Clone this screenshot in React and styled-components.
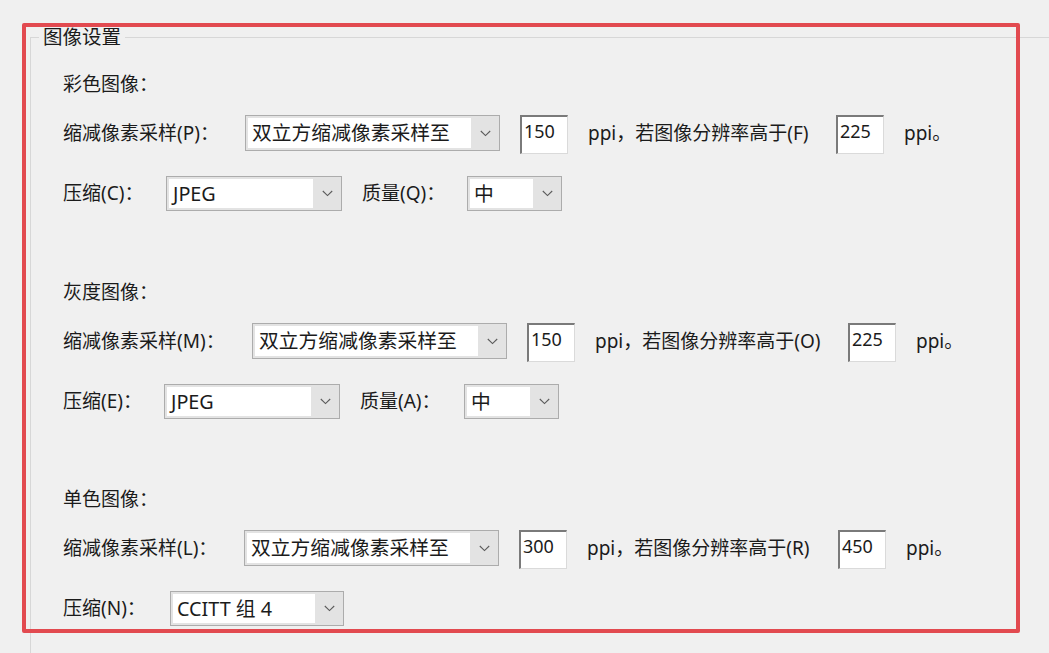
import styled, { createGlobalStyle } from 'styled-components';

const GlobalStyle = createGlobalStyle`
  html, body {
    margin: 0;
    padding: 0;
    background: #f0f0f0;
    overflow: hidden;
  }
  body {
    font-family: "Noto Sans", "Noto Sans CJK SC", sans-serif;
    color: #1b1b1b;
  }
`;

const Page = styled.div`
  position: relative;
  width: 1049px;
  height: 653px;
  padding: 25px 0 0 30px;
  box-sizing: border-box;
  overflow: hidden;
`;

const GroupBox = styled.fieldset`
  margin: 0;
  width: 100%;
  height: 100%;
  padding: 23px 0 0 8px;
  border: none;
  border-top: 1px solid #d7d7d7;
  border-left: 1px solid #d7d7d7;
  box-sizing: border-box;
  min-width: 0;
`;

const Legend = styled.legend`
  padding: 0 4px;
  font-size: 19.5px;
  line-height: 24px;
  color: #1b1b1b;
`;

const Body = styled.div`
  padding-left: 24px;
`;

const Section = styled.section`
  display: flex;
  flex-direction: column;
  margin-bottom: ${(p) => p.$after || 0}px;
`;

const Heading = styled.div`
  height: 24px;
  line-height: 24px;
  font-size: 19px;
  margin-bottom: 19px;
`;

const Row = styled.div`
  display: flex;
  align-items: flex-start;
  height: ${(p) => (p.$compact ? 35 : 39)}px;
  margin-bottom: ${(p) => (p.$compact ? 0 : 22)}px;
`;

const Label = styled.span`
  flex: none;
  width: ${(p) => p.$w}px;
  margin-left: ${(p) => p.$ml || 0}px;
  line-height: ${(p) => (p.$compact ? 35 : 36)}px;
  font-size: 19px;
  white-space: nowrap;
`;

const Select = styled.div`
  flex: none;
  display: flex;
  width: ${(p) => p.$w}px;
  height: ${(p) => (p.$compact ? 35 : 36)}px;
  box-sizing: border-box;
  border: 1px solid #acacac;
  background: #e3e3e3;
  padding: 2px 0 2px 2px;
`;

const SelectValue = styled.div`
  flex: 1;
  background: #ffffff;
  padding-left: 4px;
  font-size: 19.8px;
  line-height: ${(p) => (p.$compact ? 29 : 30)}px;
  white-space: nowrap;
  overflow: hidden;
`;

const Arrow = styled.div`
  flex: none;
  width: 28px;
  display: flex;
  align-items: center;
  justify-content: center;
`;

const NumberBox = styled.div`
  flex: none;
  width: 48px;
  height: 39px;
  box-sizing: border-box;
  margin: 0 20px;
  background: #ffffff;
  border-top: 2px solid #7a7a7a;
  border-left: 2px solid #7a7a7a;
  border-right: 1px solid #dadada;
  border-bottom: 1px solid #dadada;
  padding: 2px 0 0 2px;
  font-size: 18px;
  line-height: 24px;
`;

const Text = styled.span`
  flex: none;
  width: ${(p) => (p.$w ? `${p.$w}px` : 'auto')};
  line-height: 36px;
  font-size: 19px;
  white-space: nowrap;
`;

const Highlight = styled.div`
  position: absolute;
  left: 22px;
  top: 23px;
  width: 998px;
  height: 610px;
  box-sizing: border-box;
  border: 4px solid #e24a50;
  border-radius: 2px;
  pointer-events: none;
`;

const Chevron = () => (
  <svg width="11" height="7" viewBox="0 0 11 7">
    <path d="M0.8 1 L5.5 5.6 L10.2 1" fill="none" stroke="#5a5a5a" strokeWidth="1.1" />
  </svg>
);

const Dropdown = ({ w, compact, value }) => (
  <Select $w={w} $compact={compact}>
    <SelectValue $compact={compact}>{value}</SelectValue>
    <Arrow>
      <Chevron />
    </Arrow>
  </Select>
);

const sections = [
  {
    title: '彩色图像：',
    sample: '缩减像素采样(P)：',
    sampleW: 182,
    textW: 248,
    ppi: '150',
    above: '225',
    higher: 'ppi，若图像分辨率高于(F)',
    compress: '压缩(C)：',
    compressW: 103,
    codec: 'JPEG',
    codecW: 176,
    quality: '质量(Q)：',
    qualityW: 105,
    after: 69,
  },
  {
    title: '灰度图像：',
    sample: '缩减像素采样(M)：',
    sampleW: 189,
    textW: 253,
    ppi: '150',
    above: '225',
    higher: 'ppi，若图像分辨率高于(O)',
    compress: '压缩(E)：',
    compressW: 101,
    codec: 'JPEG',
    codecW: 176,
    quality: '质量(A)：',
    qualityW: 104,
    after: 68,
  },
  {
    title: '单色图像：',
    sample: '缩减像素采样(L)：',
    sampleW: 181,
    textW: 251,
    ppi: '300',
    above: '450',
    higher: 'ppi，若图像分辨率高于(R)',
    compress: '压缩(N)：',
    compressW: 107,
    codec: 'CCITT 组 4',
    codecW: 174,
    after: 0,
  },
];

const App = () => {
  return (
    <Page>
      <GlobalStyle />
      <GroupBox>
        <Legend>图像设置</Legend>
        <Body>
          {sections.map((s) => (
            <Section key={s.title} $after={s.after}>
              <Heading>{s.title}</Heading>
              <Row>
                <Label $w={s.sampleW}>{s.sample}</Label>
                <Dropdown w={255} value="双立方缩减像素采样至" />
                <NumberBox>{s.ppi}</NumberBox>
                <Text $w={s.textW - 20}>{s.higher}</Text>
                <NumberBox>{s.above}</NumberBox>
                <Text>ppi。</Text>
              </Row>
              <Row $compact>
                <Label $w={s.compressW} $compact>{s.compress}</Label>
                <Dropdown w={s.codecW} compact value={s.codec} />
                {s.quality && (
                  <>
                    <Label $w={s.qualityW} $ml={20} $compact>
                      {s.quality}
                    </Label>
                    <Dropdown w={95} compact value="中" />
                  </>
                )}
              </Row>
            </Section>
          ))}
        </Body>
      </GroupBox>
      <Highlight />
    </Page>
  );
};

export default App;
